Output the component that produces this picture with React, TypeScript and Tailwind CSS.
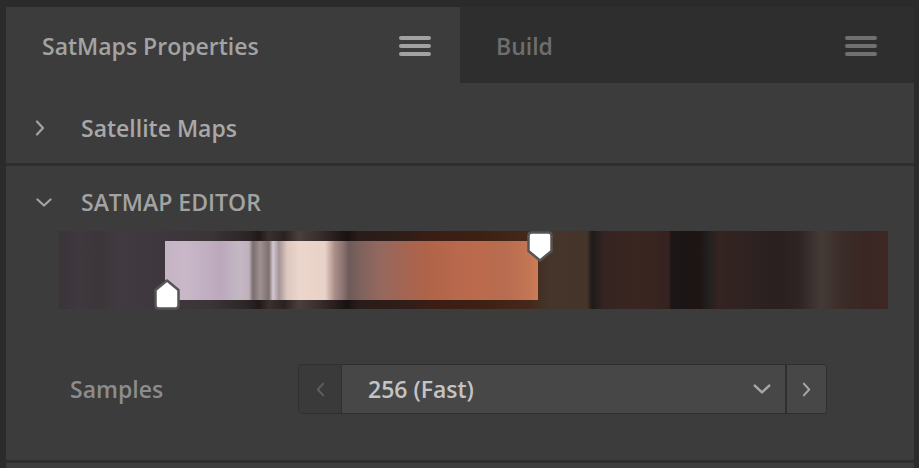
import React from 'react';

const font = { fontFamily: '"Source Sans Pro", "Open Sans", "Noto Sans", sans-serif' };

// gradient stops as [pixel offset from strip start, colour]
const outerStops: [number, string][] = [
  [0, '#3a3439'], [20, '#3f383e'], [40, '#3c3539'], [60, '#413a40'], [100, '#3e373d'],
  [150, '#3b3538'], [190, '#2c2424'], [200, '#1f1919'], [210, '#3a302e'], [225, '#2a2222'],
  [240, '#4a3f3a'], [260, '#3a2e2c'], [275, '#2a1e1e'], [288, '#181212'], [300, '#2a1c1a'],
  [340, '#2e1d18'], [370, '#3a1e14'], [420, '#3c2012'], [470, '#44281a'], [490, '#45352a'],
  [528, '#44342a'], [533, '#1e1a1a'], [545, '#352422'], [580, '#3a2620'], [610, '#352220'],
  [612, '#1c1616'], [640, '#1e1414'], [650, '#222020'], [660, '#352420'], [690, '#2e2222'],
  [720, '#2a2020'], [740, '#2e2424'], [762, '#443a36'], [785, '#3a2c28'], [810, '#3a2624'],
  [829, '#3e2822'],
];

const innerStops: [number, string][] = [
  [0, '#c4b4c4'], [20, '#c8b8c8'], [45, '#c0aec0'], [55, '#bba8bb'], [75, '#c4b8c4'],
  [84, '#c0b0bc'], [88, '#7a6e6e'], [95, '#a09090'], [104, '#7e7070'], [108, '#d0c8d4'],
  [114, '#a69494'], [122, '#dcc8c0'], [135, '#ecd6cc'], [160, '#e8d2c8'], [170, '#a88c86'],
  [178, '#8c7272'], [184, '#6e5a58'], [195, '#7e625c'], [215, '#94685e'], [245, '#a86450'],
  [265, '#b06448'], [290, '#b8684c'], [310, '#bc6a4c'], [340, '#b86c50'], [365, '#c47654'],
  [373, '#cc7c58'],
];

const toGradient = (stops: [number, string][], width: number) =>
  `linear-gradient(to right, ${stops.map(([x, c]) => `${c} ${((x / width) * 100).toFixed(2)}%`).join(', ')})`;

const Hamburger = ({ color }: { color: string }) => (
  <div className="flex flex-col gap-[4px] w-[32px]">
    {[0, 1, 2].map(i => (
      <div key={i} className={`h-[4px] rounded-full ${color}`} />
    ))}
  </div>
);

const Chevron = ({ dir, className }: { dir: 'left' | 'right' | 'down'; className?: string }) => {
  if (dir === 'down')
    return (
      <svg viewBox="0 0 16 9" className={className} fill="none" stroke="currentColor" strokeWidth="2.2" strokeLinecap="round" strokeLinejoin="round">
        <path d="M1.5 1.5 L8 7.5 L14.5 1.5" />
      </svg>
    );
  return (
    <svg viewBox="0 0 10 16" className={className} fill="none" stroke="currentColor" strokeWidth="2.2" strokeLinecap="round" strokeLinejoin="round">
      <path d={dir === 'right' ? 'M2 1.5 L8 8 L2 14.5' : 'M8 1.5 L2 8 L8 14.5'} />
    </svg>
  );
};

const Handle = ({ up }: { up: boolean }) => (
  <svg viewBox="0 0 26 31" className="w-[26px] h-[31px] block">
    <path
      d={up ? 'M13 1.5 L24.5 11 L24.5 26.5 Q24.5 29.5 21.5 29.5 L4.5 29.5 Q1.5 29.5 1.5 26.5 L1.5 11 Z' : 'M13 29.5 L24.5 20 L24.5 4.5 Q24.5 1.5 21.5 1.5 L4.5 1.5 Q1.5 1.5 1.5 4.5 L1.5 20 Z'}
      fill="#ffffff"
      stroke="#555555"
      strokeWidth="2.5"
      strokeLinejoin="round"
    />
  </svg>
);

export default function App() {
  const stripW = 829;
  const selStart = 106;
  const selW = 373;
  return (
    <div className="w-[919px] h-[468px] bg-[#2b2b2b] pl-[6px] pt-[7px] pr-[5px] flex flex-col overflow-hidden" style={font}>
      {/* tabs */}
      <div className="h-[76px] flex shrink-0">
        <div className="w-[454px] bg-[#3c3c3c] flex items-center justify-between pl-[36px] pr-[29px] pt-[2px]">
          <span className="text-[23px] text-[#a3a3a3] font-semibold">SatMaps Properties</span>
          <Hamburger color="bg-[#a2a2a2]" />
        </div>
        <div className="flex-1 bg-[#2e2e2e] flex items-center justify-between pl-[36px] pr-[37px] pt-[2px]">
          <span className="text-[23px] text-[#6e6e6e] font-semibold">Build</span>
          <Hamburger color="bg-[#707070]" />
        </div>
      </div>

      <div className="flex-1 bg-[#3c3c3c] flex flex-col">
        {/* Satellite Maps */}
        <div className="h-[80px] flex items-center shrink-0 pt-[10px]">
          <Chevron dir="right" className="w-[10px] h-[16px] ml-[29px] text-[#a3a3a3]" />
          <span className="ml-[36px] text-[23px] text-[#a8a8a8] font-semibold">Satellite Maps</span>
        </div>
        <div className="h-[3px] bg-[#2e2e2e] shrink-0" />

        {/* SATMAP EDITOR */}
        <div className="h-[65px] flex items-center shrink-0 pt-[7px]">
          <Chevron dir="down" className="w-[16px] h-[9px] ml-[30px] text-[#a3a3a3]" />
          <span className="ml-[29px] text-[23px] text-[#a3a3a3] font-semibold">SATMAP EDITOR</span>
        </div>

        <div className="ml-[53px] relative w-[829px] h-[78px] shrink-0" style={{ background: toGradient(outerStops, stripW) }}>
          <div
            className="absolute top-[10px] h-[59px]"
            style={{ left: selStart, width: selW, background: toGradient(innerStops, selW) }}
          />
          <div className="absolute left-[95px] top-[48px]">
            <Handle up />
          </div>
          <div className="absolute left-[468px] top-[0px]">
            <Handle up={false} />
          </div>
        </div>

        {/* Samples */}
        <div className="flex-1 flex items-center pt-[9px]">
          <span className="ml-[64px] w-[228px] text-[23px] text-[#8c8c8c] font-semibold">Samples</span>
          <div className="flex h-[50px] rounded-[4px] overflow-hidden border border-[#2f2f2f]">
            <div className="w-[42px] bg-[#3a3a3a] flex items-center justify-center">
              <Chevron dir="left" className="w-[9px] h-[17px] text-[#5e5e5e]" />
            </div>
            <div className="w-[444px] bg-[#474747] border-l border-[#2f2f2f] flex items-center justify-between pl-[26px] pr-[14px]">
              <span className="text-[23px] text-[#c4c4c4] font-semibold">256 (Fast)</span>
              <Chevron dir="down" className="w-[18px] h-[10px] text-[#a8a8a8]" />
            </div>
            <div className="w-[41px] bg-[#474747] border-l-2 border-[#2f2f2f] flex items-center justify-center">
              <Chevron dir="right" className="w-[9px] h-[17px] text-[#a8a8a8]" />
            </div>
          </div>
        </div>
        <div className="h-[3px] bg-[#2e2e2e] shrink-0 mb-[5px]" />
      </div>
    </div>
  );
}
